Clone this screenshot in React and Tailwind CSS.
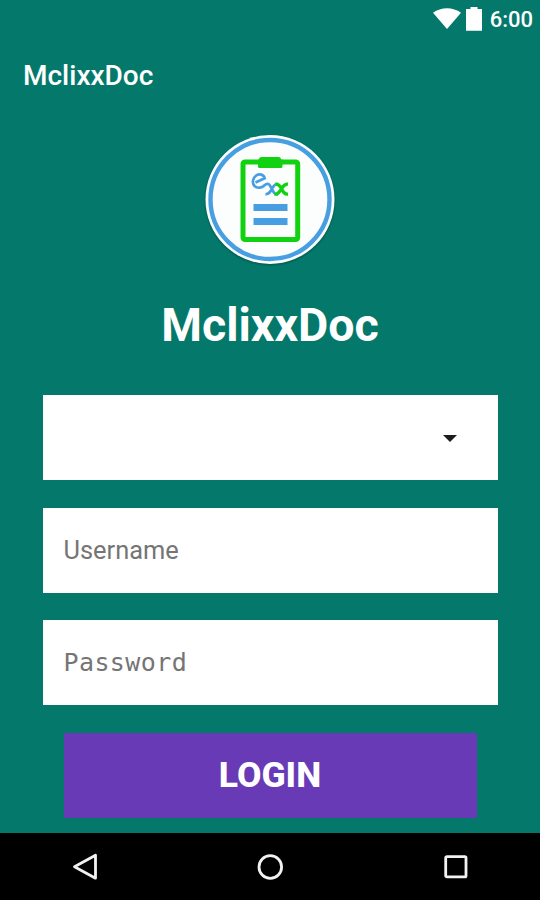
function StatusBar() {
    return (
        <div className="h-[38px] flex items-center justify-end pr-[7px]">
            <svg className="w-[28px] h-[22px]" viewBox="0 0 28 22" fill="#fff">
                <path d="M0 4.7C8-1.400 20-1.400 28 4.700L14 21z" />
            </svg>
            <svg className="w-[16px] h-[25px] ml-[5px]" viewBox="0 0 16 25" fill="#fff">
                <path d="M4.500 0h7v2H16V23.800H0V2h4.500z" />
            </svg>
            <span className="ml-2 pt-[2px] text-[22px] leading-none font-medium">6:00</span>
        </div>
    );
}

function Logo() {
    return (
        <svg className="w-[136px] h-[136px] drop-shadow-[0_1px_1px_rgba(0,0,0,0.35)]" viewBox="0 0 136 136" fill="none">
            <circle cx="68" cy="67.500" r="64.500" fill="#fcfefe" />
            <circle cx="68" cy="67.500" r="59.500" stroke="#479fe2" strokeWidth="4.400" />
            <rect x="41" y="30" width="54.700" height="77.500" rx="2" stroke="#10d210" strokeWidth="5" />
            <path d="M57 27.500q0-2.500 2.500-2.500h17q2.500 0 2.500 2.500h1.500v7q0 1.500-1.500 1.500H57.500q-1.500 0-1.500-1.500v-7z" fill="#10d210" />
            {/* exx */}
            <path
                d="M53.500 50.500L62.700 46.200C61.800 42.500 57.500 41.200 54.200 43.500C50.300 46.200 50 51.300 52.500 54C55.500 57 60 55.700 62.500 53.200C65.500 50.800 67.300 52 68.500 54.500L71.500 60C72.500 62 74 62.500 76 62.200M76 52.200C72.500 51.800 71.500 54 70 56.700C68.300 60 67 62.500 63.500 62.200"
                stroke="#479fe2"
                strokeWidth="2.700"
            />
            <path
                d="M73.500 52.200C77 51.800 78 54 79.500 56.700C81.200 60 82.500 62.500 86 62.200M86 52.200C82.500 51.800 81.200 54 79.500 56.700C77.500 60 76 62.500 72.500 62.200"
                stroke="#10d210"
                strokeWidth="3.200"
            />
            <path d="M51.500 72h34v7h-34zM51.500 86h34v7h-34z" fill="#479fe2" />
        </svg>
    );
}

function NavBar() {
    return (
        <div className="h-[67px] bg-black flex items-center">
            <svg className="w-[28px] h-[28px] ml-[71px]" viewBox="0 0 28 28" fill="none" stroke="#f2f2f2" strokeWidth="2.800" strokeLinejoin="round">
                <path d="M24.500 2.200v23L3.500 13.700z" />
            </svg>
            <svg className="w-[28px] h-[28px] ml-[157px]" viewBox="0 0 28 28" fill="none" stroke="#f2f2f2" strokeWidth="2.800">
                <circle cx="14.300" cy="14" r="11.300" />
            </svg>
            <svg className="w-[28px] h-[28px] ml-[158px]" viewBox="0 0 28 28" fill="none" stroke="#f2f2f2" strokeWidth="2.800">
                <rect x="3.700" y="3.600" width="20.300" height="20.300" rx="1.200" />
            </svg>
        </div>
    );
}

export default function App() {
    return (
        <div className="w-[540px] h-[900px] flex flex-col overflow-hidden bg-[#04796b] text-white font-['Roboto',sans-serif]">
            <StatusBar />
            <header className="h-[74px] flex items-center px-[23px] pt-[2px]">
                <span className="text-[28px] leading-none font-medium">MclixxDoc</span>
            </header>

            <main className="flex-1 flex flex-col items-center pt-[20px]">
                <Logo />
                <h1 className="mt-[30px] h-[54px] leading-[54px] text-[46.5px] font-bold">MclixxDoc</h1>

                <form className="w-[455px] mt-[43px] flex flex-col gap-[27.6px]" onSubmit={(e) => e.preventDefault()}>
                    <div className="h-[85px] bg-white flex items-center justify-end pr-[41px] pt-[1px]">
                        <svg className="w-[14px] h-[7px]" viewBox="0 0 14 7" fill="#1c1c1c">
                            <path d="M0 0h14L7 7z" />
                        </svg>
                    </div>
                    <input
                        type="text"
                        placeholder="Username"
                        className="h-[85px] bg-white px-[21px] text-[25.4px] text-gray-800 placeholder:text-[#757575] outline-none"
                    />
                    <input
                        type="password"
                        placeholder="Password"
                        className="h-[85px] bg-white px-[21px] text-[25px] tracking-[0.4px] font-['DejaVu_Sans_Mono',monospace] text-gray-800 placeholder:text-[#757575] outline-none"
                    />
                    <button type="submit" className="mx-[21px] h-[85px] pt-[1px] bg-[#693ab5] text-[35.5px] font-extrabold">
                        LOGIN
                    </button>
                </form>
            </main>

            <NavBar />
        </div>
    );
}
